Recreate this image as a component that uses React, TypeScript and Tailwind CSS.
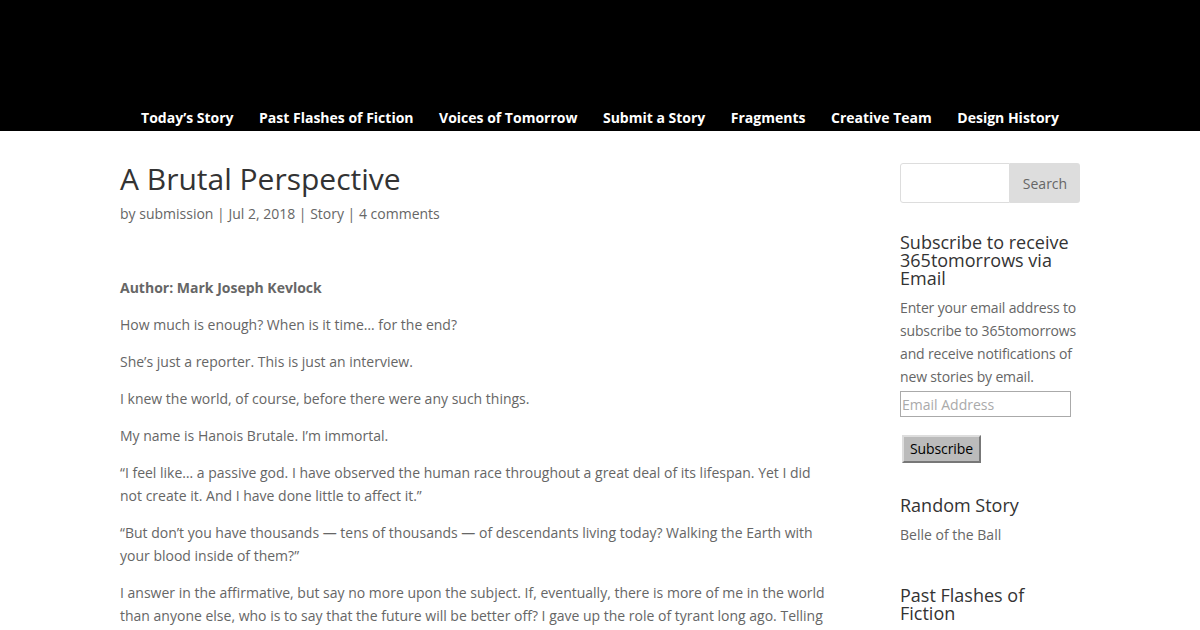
import React from "react";

const navItems = [
  "Today’s Story",
  "Past Flashes of Fiction",
  "Voices of Tomorrow",
  "Submit a Story",
  "Fragments",
  "Creative Team",
  "Design History",
];

const paragraphs = [
  "How much is enough? When is it time… for the end?",
  "She’s just a reporter. This is just an interview.",
  "I knew the world, of course, before there were any such things.",
  "My name is Hanois Brutale. I’m immortal.",
  "“I feel like… a passive god. I have observed the human race throughout a great deal of its lifespan. Yet I did not create it. And I have done little to affect it.”",
  "“But don’t you have thousands — tens of thousands — of descendants living today? Walking the Earth with your blood inside of them?”",
  "I answer in the affirmative, but say no more upon the subject. If, eventually, there is more of me in the world than anyone else, who is to say that the future will be better off? I gave up the role of tyrant long ago. Telling them what to do, what to think, how to live.",
];

export default function App() {
  return (
    <div className="min-h-screen bg-white font-['Open_Sans',sans-serif] text-[14px] text-[#666]">
      {/* HEADER */}
      <header className="bg-black h-[131px] flex items-end justify-center">
        <nav className="flex gap-[25.5px] pb-[2px]">
          {navItems.map((item) => (
            <a key={item} className="text-white font-bold text-[14px] leading-[23px]">
              {item}
            </a>
          ))}
        </nav>
      </header>

      <div className="w-[960px] mx-auto flex">
        {/* MAIN */}
        <main className="w-[710px] pt-[30px]">
          <h1 className="text-[30px] leading-[36px] text-[#333]">A Brutal Perspective</h1>
          <p className="mt-[5px] leading-[23px]">
            by submission | Jul 2, 2018 | Story | 4 comments
          </p>
          <div className="mt-[51px]">
            <p className="leading-[23px] pb-[14px] font-bold">Author: Mark Joseph Kevlock</p>
            {paragraphs.map((p, i) => (
              <p key={i} className="leading-[23px] pb-[14px]">
                {p}
              </p>
            ))}
          </div>
        </main>

        {/* SIDEBAR */}
        <aside className="ml-[70px] w-[180px] pt-[32px]">
          <div className="flex h-[40px]">
            <div className="flex-1 border border-[#ddd] rounded-l-[3px] bg-white" />
            <button className="w-[70px] bg-[#ddd] text-[#666] text-[14px] rounded-r-[3px]">Search</button>
          </div>

          <h4 className="mt-[30px] text-[18px] leading-[18px] text-[#333]">
            Subscribe to receive 365tomorrows via Email
          </h4>
          <p className="mt-[9px] w-[186px] leading-[23px] tracking-[-0.15px]">
            Enter your email address to subscribe to 365tomorrows and receive notifications of new stories by email.
          </p>
          <div className="mt-[3px] w-[171px] h-[26px] border border-[#aaa] px-[1px] flex items-center text-[14px] text-[#aaa]">
            Email Address
          </div>
          <button className="mt-[18px] ml-[2px] h-[28px] px-[6px] bg-[#bbb] text-black text-[14px] leading-[20px] tracking-[-0.1px] border-2 border-t-[#ddd] border-l-[#ddd] border-b-[#777] border-r-[#777]">
            Subscribe
          </button>

          <h4 className="mt-[33px] text-[18px] leading-[18px] text-[#333]">Random Story</h4>
          <p className="mt-[9px] leading-[23px]">Belle of the Ball</p>

          <h4 className="mt-[40px] text-[18px] leading-[18px] text-[#333]">Past Flashes of Fiction</h4>
        </aside>
      </div>
    </div>
  );
}
